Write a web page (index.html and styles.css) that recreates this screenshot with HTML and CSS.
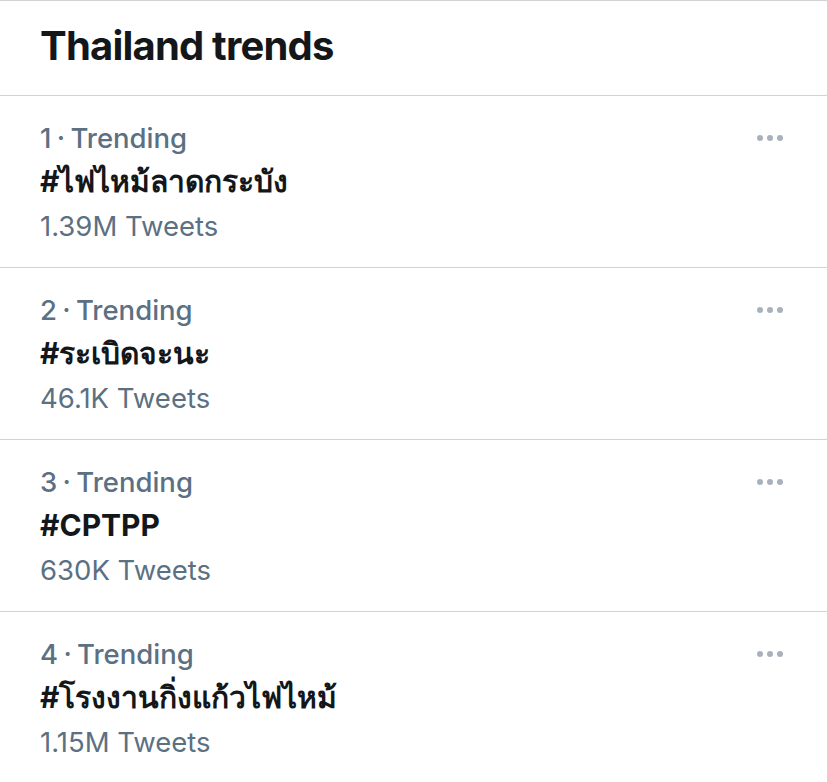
FILE: index.html
```html
<!DOCTYPE html>
<html lang="th">
<head>
<meta charset="utf-8">
<link rel="stylesheet" href="styles.css">
</head>
<body>
<div class="panel">
  <div class="header">Thailand trends</div>
  <div class="trend">
    <div class="info">
      <div class="meta">1 · Trending</div>
      <div class="tag">#ไฟไหม้ลาดกระบัง</div>
      <div class="count">1.39M Tweets</div>
    </div>
    <div class="more"><span></span><span></span><span></span></div>
  </div>
  <div class="trend">
    <div class="info">
      <div class="meta">2 · Trending</div>
      <div class="tag">#ระเบิดจะนะ</div>
      <div class="count">46.1K Tweets</div>
    </div>
    <div class="more"><span></span><span></span><span></span></div>
  </div>
  <div class="trend">
    <div class="info">
      <div class="meta">3 · Trending</div>
      <div class="tag">#CPTPP</div>
      <div class="count">630K Tweets</div>
    </div>
    <div class="more"><span></span><span></span><span></span></div>
  </div>
  <div class="trend">
    <div class="info">
      <div class="meta">4 · Trending</div>
      <div class="tag">#โรงงานกิ่งแก้วไฟไหม้</div>
      <div class="count">1.15M Tweets</div>
    </div>
    <div class="more"><span></span><span></span><span></span></div>
  </div>
</div>
</body>
</html>
```
FILE: styles.css
```css
html, body {
  margin: 0;
  padding: 0;
  background: #ffffff;
}
body {
  font-family: Inter, "Liberation Sans", "Noto Sans", sans-serif;
  color: #14171a;
}
.panel {
  border-top: 1px solid #cfd3d6;
}
.header {
  padding: 21px 40px 25px;
  font-size: 40px;
  line-height: 48px;
  font-weight: 700;
  letter-spacing: -0.8px;
  border-bottom: 1px solid #cfd3d6;
}
.trend {
  display: flex;
  justify-content: space-between;
  align-items: flex-start;
  padding: 21px 40px 21px 40px;
  border-bottom: 1px solid #cfd3d6;
}
.info > div {
  line-height: 43px;
  height: 43px;
}
.meta, .count {
  font-size: 27.5px;
  color: #5b7083;
}
.meta {
  font-weight: 500;
  word-spacing: -2px;
}
.info > .count {
  line-height: 47px;
}
.tag {
  font-size: 30px;
  line-height: 36px;
  font-weight: 700;
  color: #14171a;
}
.more {
  display: flex;
  gap: 4px;
  margin-top: 18px;
  margin-right: 4px;
}
.more span {
  width: 6px;
  height: 6px;
  border-radius: 50%;
  background: #a9b1ba;
}
```
